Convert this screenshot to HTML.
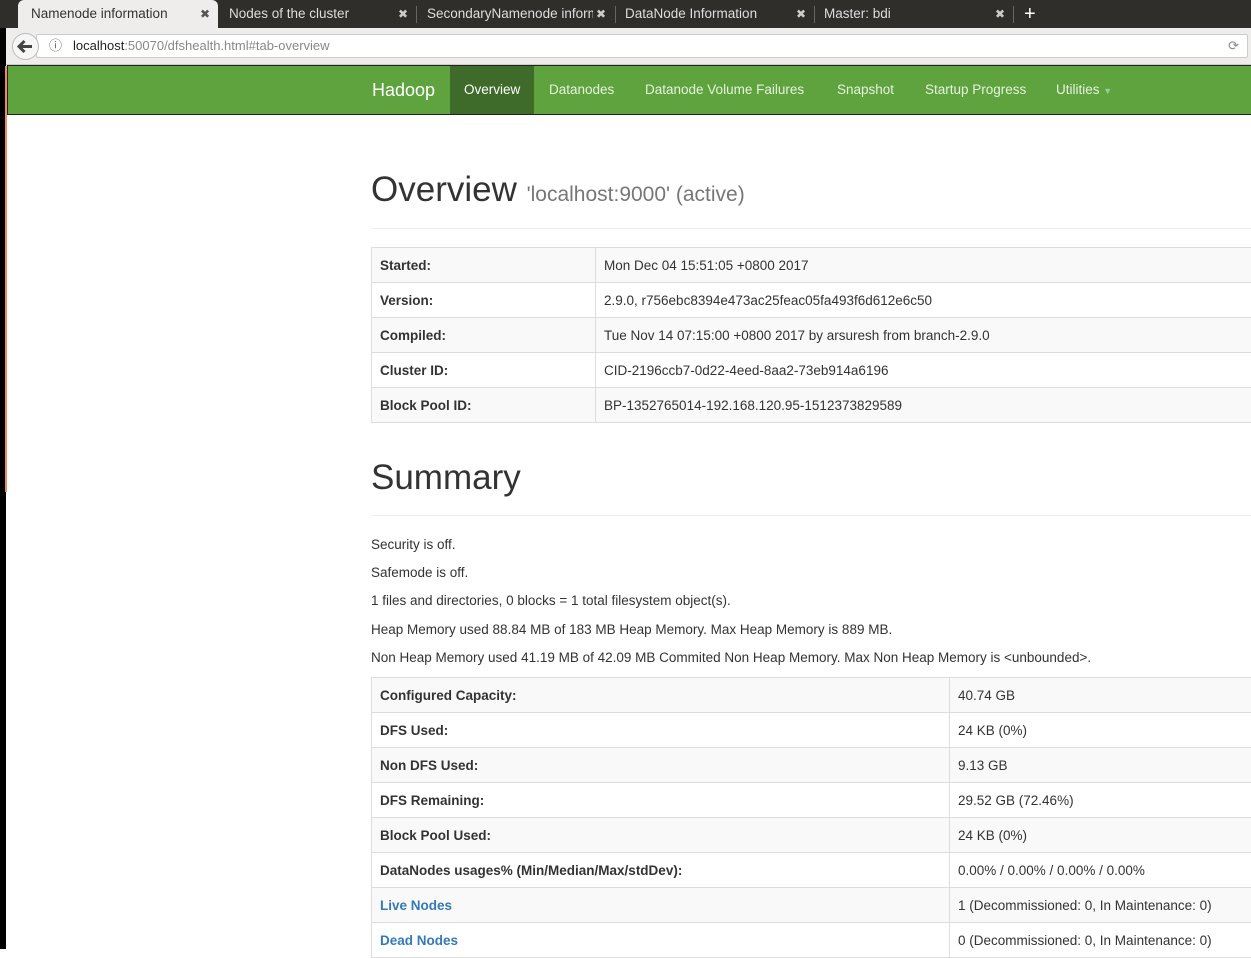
<!DOCTYPE html>
<html><head><meta charset="utf-8"><style>
*{box-sizing:border-box;margin:0;padding:0}
body{width:1251px;height:949px;overflow:hidden;background:#fff;font-family:"Liberation Sans",sans-serif;color:#333;position:relative}
.tabs{position:absolute;left:0;top:0;width:1251px;height:28px;background:#2f2e2b}
.tab{position:absolute;top:0;height:28px;color:#ddd;font-size:13.5px;line-height:28px;padding-left:9px}
.tab .x{position:absolute;right:8px;top:0;font-size:12px;color:#ccc}
.tab.act{background:#eeedeb;color:#333;border-radius:6px 6px 0 0}
.tab.act .x{color:#555}
.sep{position:absolute;top:6px;width:1px;height:17px;background:#666}
.urlbar{position:absolute;left:0;top:28px;width:1251px;height:37px;background:#eeedeb;border-bottom:1px solid #ccc}
.url{position:absolute;left:36px;top:6px;width:1212px;height:24px;background:#fff;border:1px solid #ccc;border-radius:2px;font-size:13px;line-height:22px;padding-left:36px;color:#888}
.back{position:absolute;left:12px;top:5px;width:27px;height:27px;border-radius:50%;border:1px solid #bbb;background:#f6f6f6}
.black{position:absolute;left:0;top:28px;width:6px;height:921px;background:#000}
.orange{position:absolute;left:5px;top:66px;width:2px;height:426px;background:#f08a5d}
.nav{position:absolute;left:7px;top:65px;width:1244px;height:50px;background:#5ea33d;border:1px solid #222;border-right:none}
.nav a{position:absolute;top:0;height:48px;line-height:48px;color:#e6f2de;font-size:13.5px}
.brand{font-size:18px!important;color:#fff!important}
.active{background:#3f6b2a;color:#fff!important;padding:0 14px}
h1{position:absolute;left:371px;font-weight:normal;font-size:35px;color:#333}
h1 small{font-size:21px;color:#777}
.hr{position:absolute;left:371px;width:880px;height:1px;background:#eee}
table{position:absolute;left:371px;width:900px;border-collapse:collapse;font-size:13.5px}
td{border:1px solid #ddd;height:35px;padding:0 8px;vertical-align:middle}
tr:nth-child(odd) td{background:#f9f9f9}
td:first-child{font-weight:bold}
p{position:absolute;left:371px;font-size:13.5px}
a.l{color:#337ab7;text-decoration:none}
</style></head><body>
<div class="tabs">
<div class="tab act" style="left:18px;width:200px;padding-left:13px">Namenode information<span class="x">✖</span></div>
<div class="tab" style="left:220px;width:196px">Nodes of the cluster<span class="x">✖</span></div>
<div class="sep" style="left:416px"></div>
<div class="tab" style="left:418px;width:196px;overflow:hidden;white-space:nowrap">SecondaryNamenode inform<span class="x" style="background:#2f2e2b;padding-left:3px">✖</span></div>
<div class="sep" style="left:615px"></div>
<div class="tab" style="left:616px;width:198px">DataNode Information<span class="x">✖</span></div>
<div class="sep" style="left:814px"></div>
<div class="tab" style="left:815px;width:198px">Master: bdi<span class="x">✖</span></div>
<div class="sep" style="left:1013px"></div>
<div class="tab" style="left:1015px;font-size:20px;color:#fff">+</div>
</div>
<div class="urlbar"><div class="url"><span style="position:absolute;left:12px;color:#666">ⓘ</span><span style="color:#222">localhost</span>:50070/dfshealth.html#tab-overview<span style="position:absolute;right:8px;color:#888">⟳</span></div><div class="back"><svg width="25" height="25" viewBox="0 0 25 25"><path d="M6 12.5h13M11.5 7l-5.5 5.5 5.5 5.5" stroke="#444" stroke-width="3" fill="none"/></svg></div></div>
<div class="black"></div><div class="orange"></div>
<div class="nav">
<a class="brand" style="left:364px">Hadoop</a>
<a class="active" style="left:442px">Overview</a>
<a style="left:541px">Datanodes</a>
<a style="left:637px">Datanode Volume Failures</a>
<a style="left:829px">Snapshot</a>
<a style="left:917px">Startup Progress</a>
<a style="left:1048px">Utilities <span style="font-size:9px;color:#9c9">▼</span></a>
</div>
<h1 style="top:170px">Overview <small>'localhost:9000' (active)</small></h1>
<div class="hr" style="top:228px"></div>
<table style="top:247px">
<tr><td style="width:224px">Started:</td><td>Mon Dec 04 15:51:05 +0800 2017</td></tr>
<tr><td>Version:</td><td>2.9.0, r756ebc8394e473ac25feac05fa493f6d612e6c50</td></tr>
<tr><td>Compiled:</td><td>Tue Nov 14 07:15:00 +0800 2017 by arsuresh from branch-2.9.0</td></tr>
<tr><td>Cluster ID:</td><td>CID-2196ccb7-0d22-4eed-8aa2-73eb914a6196</td></tr>
<tr><td>Block Pool ID:</td><td>BP-1352765014-192.168.120.95-1512373829589</td></tr>
</table>
<h1 style="top:458px">Summary</h1>
<div class="hr" style="top:515px"></div>
<p style="top:537px">Security is off.</p>
<p style="top:565px">Safemode is off.</p>
<p style="top:593px">1 files and directories, 0 blocks = 1 total filesystem object(s).</p>
<p style="top:622px">Heap Memory used 88.84 MB of 183 MB Heap Memory. Max Heap Memory is 889 MB.</p>
<p style="top:650px">Non Heap Memory used 41.19 MB of 42.09 MB Commited Non Heap Memory. Max Non Heap Memory is &lt;unbounded&gt;.</p>
<table style="top:677px">
<tr><td style="width:578px">Configured Capacity:</td><td>40.74 GB</td></tr>
<tr><td>DFS Used:</td><td>24 KB (0%)</td></tr>
<tr><td>Non DFS Used:</td><td>9.13 GB</td></tr>
<tr><td>DFS Remaining:</td><td>29.52 GB (72.46%)</td></tr>
<tr><td>Block Pool Used:</td><td>24 KB (0%)</td></tr>
<tr><td>DataNodes usages% (Min/Median/Max/stdDev):</td><td>0.00% / 0.00% / 0.00% / 0.00%</td></tr>
<tr><td><a class="l">Live Nodes</a></td><td>1 (Decommissioned: 0, In Maintenance: 0)</td></tr>
<tr><td><a class="l">Dead Nodes</a></td><td>0 (Decommissioned: 0, In Maintenance: 0)</td></tr>
</table>
</body></html>
